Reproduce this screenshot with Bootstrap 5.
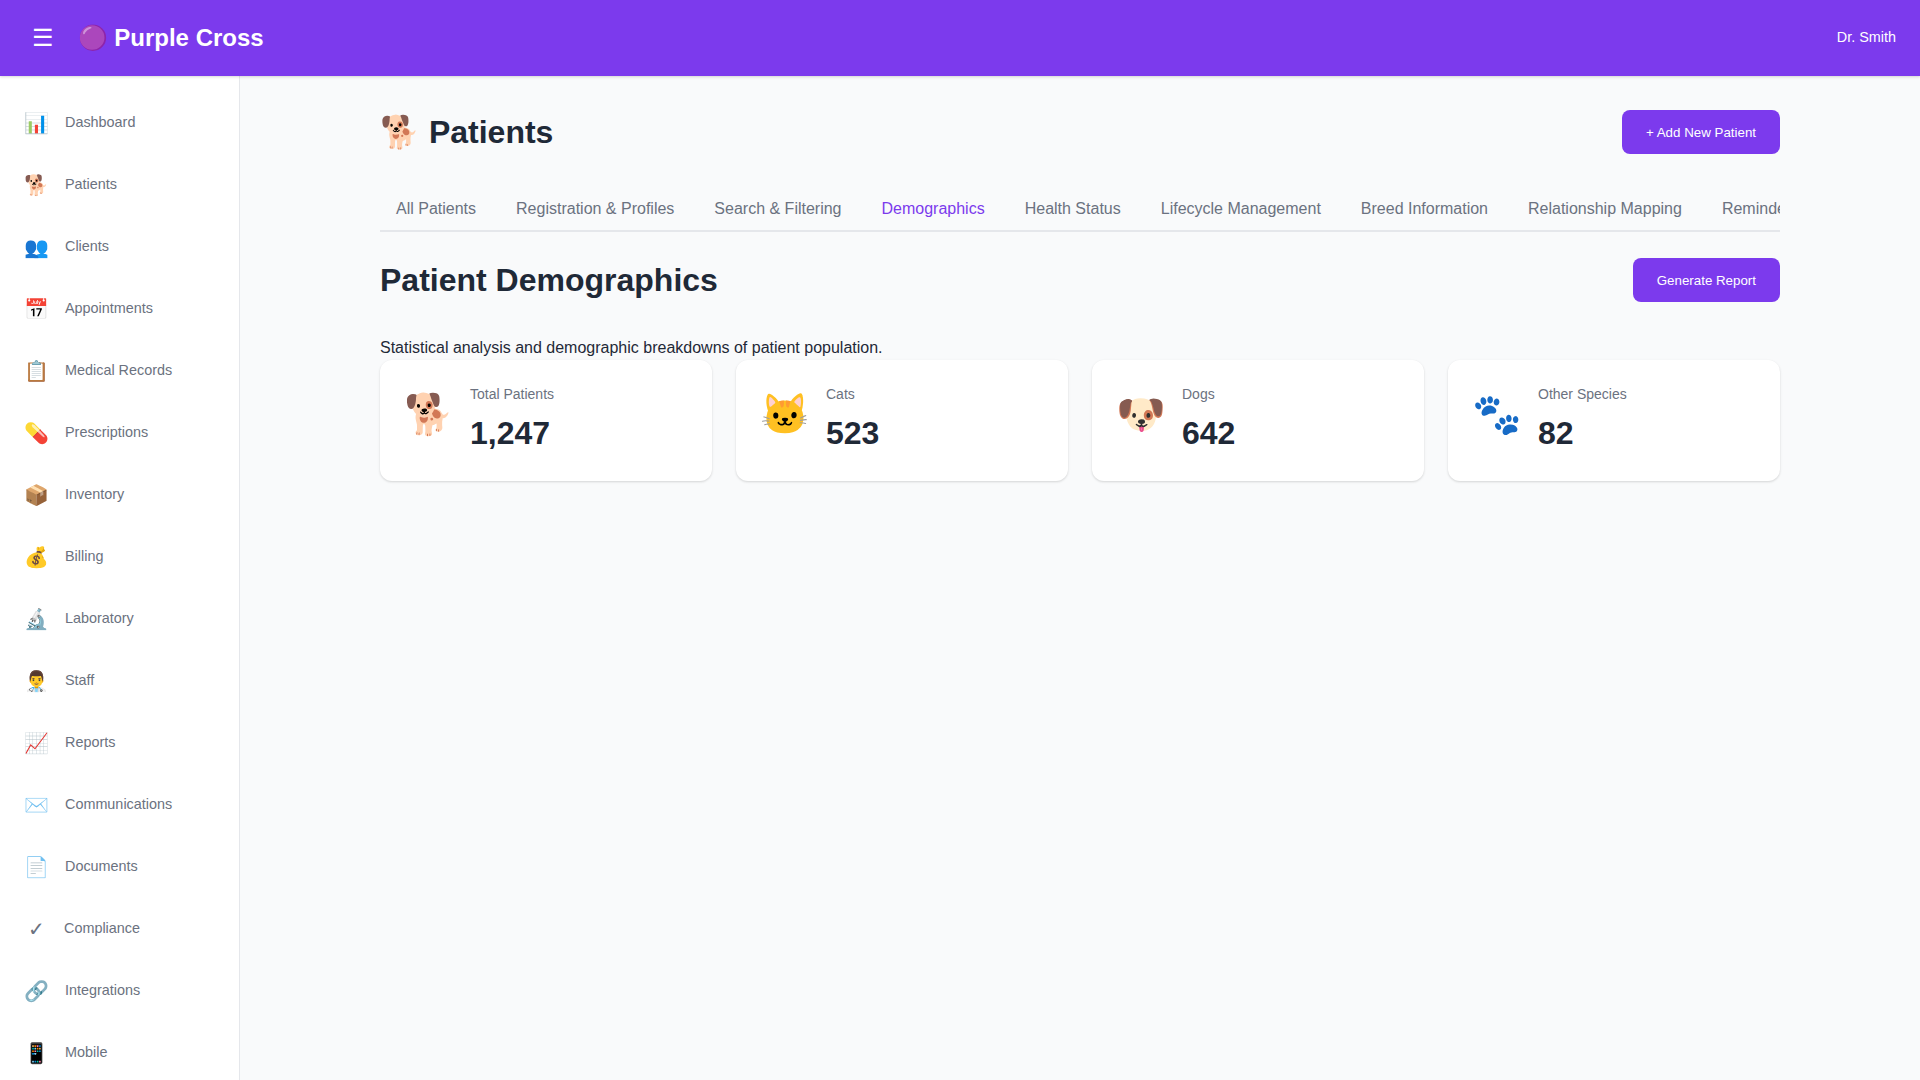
<!DOCTYPE html>
<html lang="en">
<head>
<meta charset="utf-8">
<title>Purple Cross</title>
<link href="https://cdn.jsdelivr.net/npm/bootstrap@5.3.0/dist/css/bootstrap.min.css" rel="stylesheet">
<style>
body{font-family:"Liberation Sans",Arial,sans-serif;background:#f9fafb;color:#1f2937;line-height:1.5;height:1080px;overflow:hidden}
.topbar{background:#7c3aed;height:76px;padding:0 24px;position:relative;box-shadow:0 1px 3px rgba(0,0,0,.1),0 1px 2px rgba(0,0,0,.06)}
.menu-btn{font-size:24px;line-height:28px;padding:8px;background:none;border:0;color:#fff}
.brand-name{font-size:24px;line-height:36px;font-weight:700;margin-left:-.4px}
.user-name{font-size:14.4px}
.side{width:240px;height:1004px;background:#fff;border-right:1px solid #e5e7eb;padding-top:16px;overflow:hidden}
.side-link{height:62px;padding:0 24px;gap:16px;color:#6b7280;font-size:14.4px;text-decoration:none}
.side-link span:last-child{line-height:21.6px;margin-top:-1px}
.side-icon{font-size:20px;line-height:30px;min-width:24px;text-align:center}
.page{width:1400px;margin:0 auto;padding-top:32px}
.page h1,.page h2{font-size:32px;font-weight:700;line-height:48px;margin:0}
.title-row{margin-bottom:32px}
.action{background:#7c3aed;color:#fff;border:0;border-radius:8px;height:44px;padding:1px 24px 0;font-size:13.333px;line-height:15px}
.tabs{border-bottom:2px solid #e5e7eb;overflow:hidden;height:44px;margin-bottom:24px}
.tab{padding:9px 16px 7px;color:#6b7280;text-decoration:none;white-space:nowrap;line-height:24px}
.tab.active{color:#7c3aed}
.stats{display:grid;grid-template-columns:repeat(4,1fr);gap:24px}
.stat{background:#fff;border-radius:12px;padding:24px;height:121px;box-shadow:0 1px 3px rgba(0,0,0,.1),0 1px 2px rgba(0,0,0,.06)}
.stat-icon{font-size:40px;line-height:60px}
.stat-label{font-size:14px;line-height:21px;margin-bottom:4px;color:#6b7280}
.stat-value{font-size:32px;line-height:48px;font-weight:700}
</style>
<script src="https://cdn.jsdelivr.net/npm/bootstrap@5.3.0/dist/js/bootstrap.bundle.min.js"></script>
</head>
<body>
<header class="topbar d-flex align-items-center justify-content-between text-white">
<div class="d-flex align-items-center gap-3"><button class="menu-btn" aria-label="Menu">☰</button><div class="brand-name">🟣 Purple Cross</div></div>
<div class="user-name">Dr. Smith</div>
</header>
<div class="d-flex">
<nav class="side flex-shrink-0">
<a class="side-link d-flex align-items-center" href="#"><span class="side-icon">📊</span><span>Dashboard</span></a>
<a class="side-link d-flex align-items-center" href="#"><span class="side-icon">🐕</span><span>Patients</span></a>
<a class="side-link d-flex align-items-center" href="#"><span class="side-icon">👥</span><span>Clients</span></a>
<a class="side-link d-flex align-items-center" href="#"><span class="side-icon">📅</span><span>Appointments</span></a>
<a class="side-link d-flex align-items-center" href="#"><span class="side-icon">📋</span><span>Medical Records</span></a>
<a class="side-link d-flex align-items-center" href="#"><span class="side-icon">💊</span><span>Prescriptions</span></a>
<a class="side-link d-flex align-items-center" href="#"><span class="side-icon">📦</span><span>Inventory</span></a>
<a class="side-link d-flex align-items-center" href="#"><span class="side-icon">💰</span><span>Billing</span></a>
<a class="side-link d-flex align-items-center" href="#"><span class="side-icon">🔬</span><span>Laboratory</span></a>
<a class="side-link d-flex align-items-center" href="#"><span class="side-icon">👨‍⚕️</span><span>Staff</span></a>
<a class="side-link d-flex align-items-center" href="#"><span class="side-icon">📈</span><span>Reports</span></a>
<a class="side-link d-flex align-items-center" href="#"><span class="side-icon">✉️</span><span>Communications</span></a>
<a class="side-link d-flex align-items-center" href="#"><span class="side-icon">📄</span><span>Documents</span></a>
<a class="side-link d-flex align-items-center" href="#"><span class="side-icon">✓</span><span>Compliance</span></a>
<a class="side-link d-flex align-items-center" href="#"><span class="side-icon">🔗</span><span>Integrations</span></a>
<a class="side-link d-flex align-items-center" href="#"><span class="side-icon">📱</span><span>Mobile</span></a>
</nav>
<main class="flex-grow-1">
<div class="page">
<div class="title-row d-flex justify-content-between align-items-center"><h1>🐕 Patients</h1><button class="action">+ Add New Patient</button></div>
<div class="tabs d-flex gap-2">
<a class="tab" href="#">All Patients</a><a class="tab" href="#">Registration &amp; Profiles</a><a class="tab" href="#">Search &amp; Filtering</a><a class="tab active" href="#">Demographics</a><a class="tab" href="#">Health Status</a><a class="tab" href="#">Lifecycle Management</a><a class="tab" href="#">Breed Information</a><a class="tab" href="#">Relationship Mapping</a><a class="tab" href="#">Reminders</a>
</div>
<div class="title-row d-flex justify-content-between align-items-center"><h2>Patient Demographics</h2><button class="action">Generate Report</button></div>
<p class="mb-0">Statistical analysis and demographic breakdowns of patient population.</p>
<div class="stats">
<div class="stat d-flex gap-3"><div class="stat-icon">🐕</div><div><div class="stat-label">Total Patients</div><div class="stat-value">1,247</div></div></div>
<div class="stat d-flex gap-3"><div class="stat-icon">🐱</div><div><div class="stat-label">Cats</div><div class="stat-value">523</div></div></div>
<div class="stat d-flex gap-3"><div class="stat-icon">🐶</div><div><div class="stat-label">Dogs</div><div class="stat-value">642</div></div></div>
<div class="stat d-flex gap-3"><div class="stat-icon">🐾</div><div><div class="stat-label">Other Species</div><div class="stat-value">82</div></div></div>
</div>
</div>
</main>
</div>
</body>
</html>
